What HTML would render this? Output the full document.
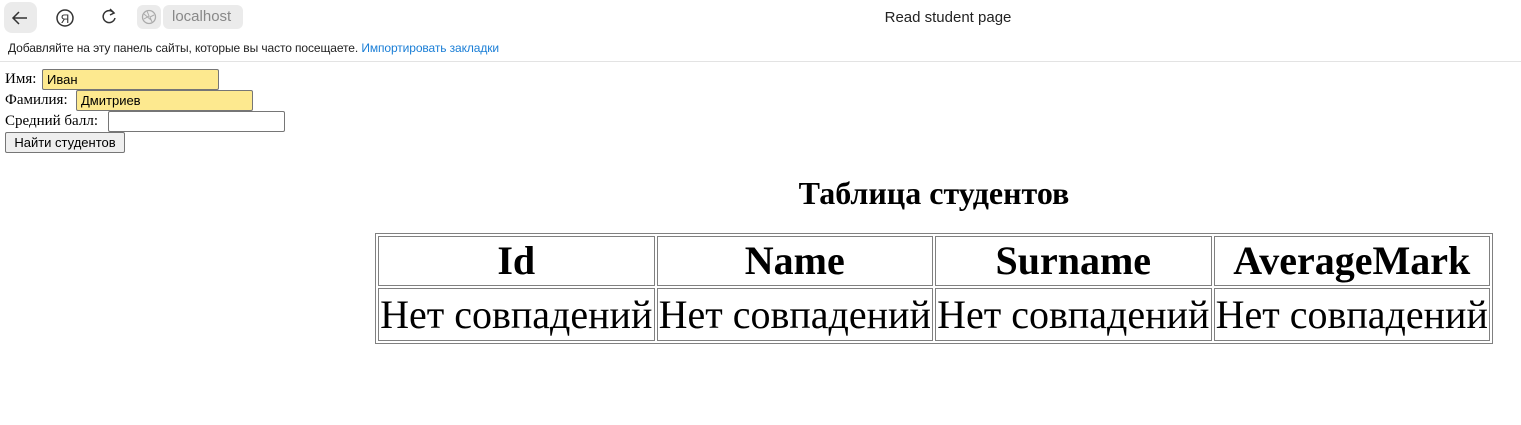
<!DOCTYPE html>
<html><head><meta charset="utf-8"><style>
*{margin:0;padding:0;box-sizing:border-box}
body{width:1521px;height:425px;background:#fff;position:relative;overflow:hidden;font-family:"Liberation Serif",serif}
.ab{position:absolute}
.chrome{font-family:"Liberation Sans",sans-serif}
input{position:absolute;height:21px;border:1px solid #767676;border-radius:2px;font:13px "Liberation Sans",sans-serif;padding:0 4px;color:#000}
.lab{position:absolute;left:5px;font-size:15px;line-height:18px}
table{position:absolute;left:375px;top:233px;width:1118px;border:1px solid #808080;border-spacing:2px}
td,th{border:1px solid #808080;text-align:center;white-space:nowrap;width:25%;padding:0}
th{font-size:40px;font-weight:bold;line-height:48px}
td{font-size:40px;line-height:50px;padding-top:1px;height:52px}
</style></head><body>
<div class="ab" style="left:4px;top:2px;width:33px;height:31px;background:#ebebeb;border-radius:8px"></div>
<svg class="ab" style="left:11px;top:9px" width="18" height="18" viewBox="0 0 18 18"><path d="M16 9H2M8 3L2 9l6 6" stroke="#333" stroke-width="1.5" fill="none"/></svg>
<svg class="ab" style="left:55px;top:8px" width="20" height="20" viewBox="0 0 20 20"><circle cx="10" cy="10" r="8" stroke="#333" stroke-width="1.5" fill="none"/><text x="10" y="15" font-size="12" text-anchor="middle" font-family="Liberation Sans" fill="#333">Я</text></svg>
<svg class="ab" style="left:100px;top:8px" width="18" height="18" viewBox="0 0 18 18"><path d="M14 5A6 6 0 1 0 15 10" stroke="#333" stroke-width="1.5" fill="none"/><path d="M10 1l4 4-4 2" stroke="#333" stroke-width="1.5" fill="none"/></svg>
<div class="ab" style="left:137px;top:5px;width:24px;height:24px;background:#ebebeb;border-radius:6px"></div>
<svg class="ab" style="left:141px;top:9px" width="16" height="16" viewBox="0 0 16 16"><circle cx="8" cy="8" r="6.5" stroke="#aaa" stroke-width="1.3" fill="none"/><path d="M3 5l7 6M6 2l2 5-5 3M13 6l-4 2 2 5" stroke="#aaa" stroke-width="1" fill="none"/></svg>
<div class="ab chrome" style="left:163px;top:5px;width:80px;height:24px;background:#ebebeb;border-radius:6px;color:#888;font-size:15px;line-height:24px;padding-left:9px">localhost</div>
<div class="ab chrome" style="left:0;width:1521px;top:9px;text-align:center;font-size:15px;color:#222;padding-left:375px;">Read student page</div>
<div class="ab chrome" style="left:8px;top:41px;font-size:12px;color:#222;letter-spacing:-0.1px">Добавляйте на эту панель сайты, которые вы часто посещаете. <span style="color:#1a7ed6">Импортировать закладки</span></div>
<div class="ab" style="left:0;top:61px;width:1521px;height:1px;background:#e3e3e3"></div>

<div class="lab" style="top:70px">Имя:</div>
<input style="left:42px;top:69px;width:177px;background:#fde98f" value="Иван">
<div class="lab" style="top:91px">Фамилия:</div>
<input style="left:76px;top:90px;width:177px;background:#fde98f" value="Дмитриев">
<div class="lab" style="top:112px">Средний балл:</div>
<input style="left:108px;top:111px;width:177px;background:#fff">
<div class="ab chrome" style="left:5px;top:132px;width:120px;height:21px;border:1px solid #767676;border-radius:2px;background:#efefef;font-size:13px;line-height:19px;text-align:center">Найти студентов</div>

<div class="ab" style="left:375px;width:1118px;top:175px;text-align:center;font-size:32px;font-weight:bold">Таблица студентов</div>
<table><tr><th>Id</th><th>Name</th><th>Surname</th><th>AverageMark</th></tr>
<tr><td>Нет совпадений</td><td>Нет совпадений</td><td>Нет совпадений</td><td>Нет совпадений</td></tr></table>
</body></html>
